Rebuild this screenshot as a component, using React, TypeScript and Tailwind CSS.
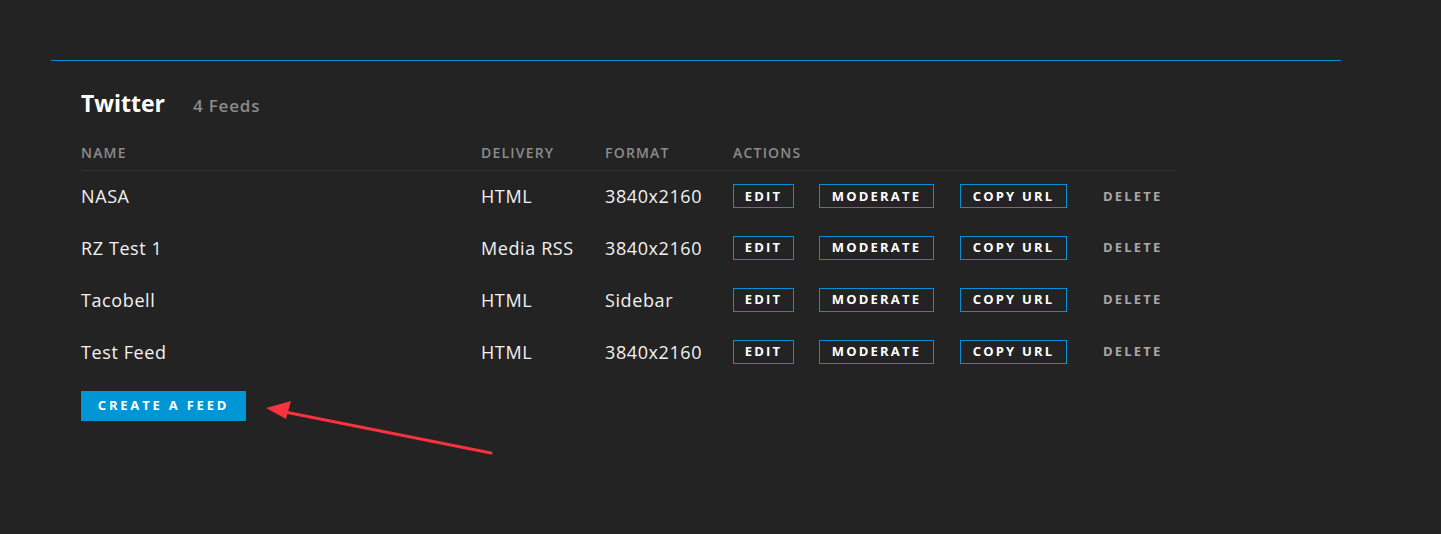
const feeds = [
  { name: 'NASA', delivery: 'HTML', format: '3840x2160' },
  { name: 'RZ Test 1', delivery: 'Media RSS', format: '3840x2160' },
  { name: 'Tacobell', delivery: 'HTML', format: 'Sidebar' },
  { name: 'Test Feed', delivery: 'HTML', format: '3840x2160' },
];

export default function App() {
  return (
    <div
      className="relative min-h-[534px] bg-[#232323] text-white"
      style={{ fontFamily: '"Open Sans", "Liberation Sans", sans-serif' }}
    >
      <div className="pt-[60px] pl-[51px] pr-[100px]">
        <div className="border-t border-[#0a8fd6] pl-[30px]">
          {/* Header */}
          <div className="flex items-baseline mt-[31px]">
            <h2 className="text-[23px] font-bold text-white leading-none">Twitter</h2>
            <span className="ml-[28px] text-[17px] font-semibold tracking-[0.8px] text-[#8b8b8b]">4 Feeds</span>
          </div>

          {/* Feeds Table */}
          <table className="mt-[23px] w-[1095px] table-fixed border-collapse">
            <thead>
              <tr className="border-b border-[#333333]">
                <th className="w-[400px] pb-[7px] text-left text-[14px] font-semibold tracking-[1.2px] text-[#8b8b8b]">NAME</th>
                <th className="w-[124px] pb-[7px] text-left text-[14px] font-semibold tracking-[1.2px] text-[#8b8b8b]">DELIVERY</th>
                <th className="w-[128px] pb-[7px] text-left text-[14px] font-semibold tracking-[1.2px] text-[#8b8b8b]">FORMAT</th>
                <th className="pb-[7px] text-left text-[14px] font-semibold tracking-[1.2px] text-[#8b8b8b]">ACTIONS</th>
              </tr>
            </thead>
            <tbody>
              {feeds.map((feed) => (
                <tr key={feed.name} className="h-[52px]">
                  <td className="text-[18px] tracking-[0.6px] text-[#f2f2f2]">{feed.name}</td>
                  <td className="text-[18px] tracking-[0.6px] text-[#f2f2f2]">{feed.delivery}</td>
                  <td className="text-[18px] tracking-[0.6px] text-[#f2f2f2]">{feed.format}</td>
                  <td>
                    <div className="flex items-center">
                      <button className="w-[61px] h-[24px] border border-[#0a8fd6] text-[13px] font-bold tracking-[2.2px] text-white">
                        EDIT
                      </button>
                      <button className="ml-[25px] w-[115px] h-[24px] border border-[#0a8fd6] text-[13px] font-bold tracking-[2.2px] text-white">
                        MODERATE
                      </button>
                      <button className="ml-[26px] w-[107px] h-[24px] border border-[#0a8fd6] text-[13px] font-bold tracking-[2.2px] text-white">
                        COPY URL
                      </button>
                      <button className="ml-[36px] text-[13px] font-bold tracking-[2.2px] text-[#a8a8a8]">
                        DELETE
                      </button>
                    </div>
                  </td>
                </tr>
              ))}
            </tbody>
          </table>

          <button className="mt-[13px] w-[165px] h-[30px] bg-[#0095d5] text-[13px] font-bold tracking-[2.8px] text-white">
            CREATE A FEED
          </button>
        </div>
      </div>

      {/* Annotation arrow */}
      <svg className="absolute left-0 top-0 pointer-events-none" width="1441" height="534">
        <line x1="491" y1="453" x2="285" y2="412" stroke="#f6333e" strokeWidth="3" strokeLinecap="round" />
        <polygon points="266,408 291,401 286,419" fill="#f6333e" />
      </svg>
    </div>
  );
}
